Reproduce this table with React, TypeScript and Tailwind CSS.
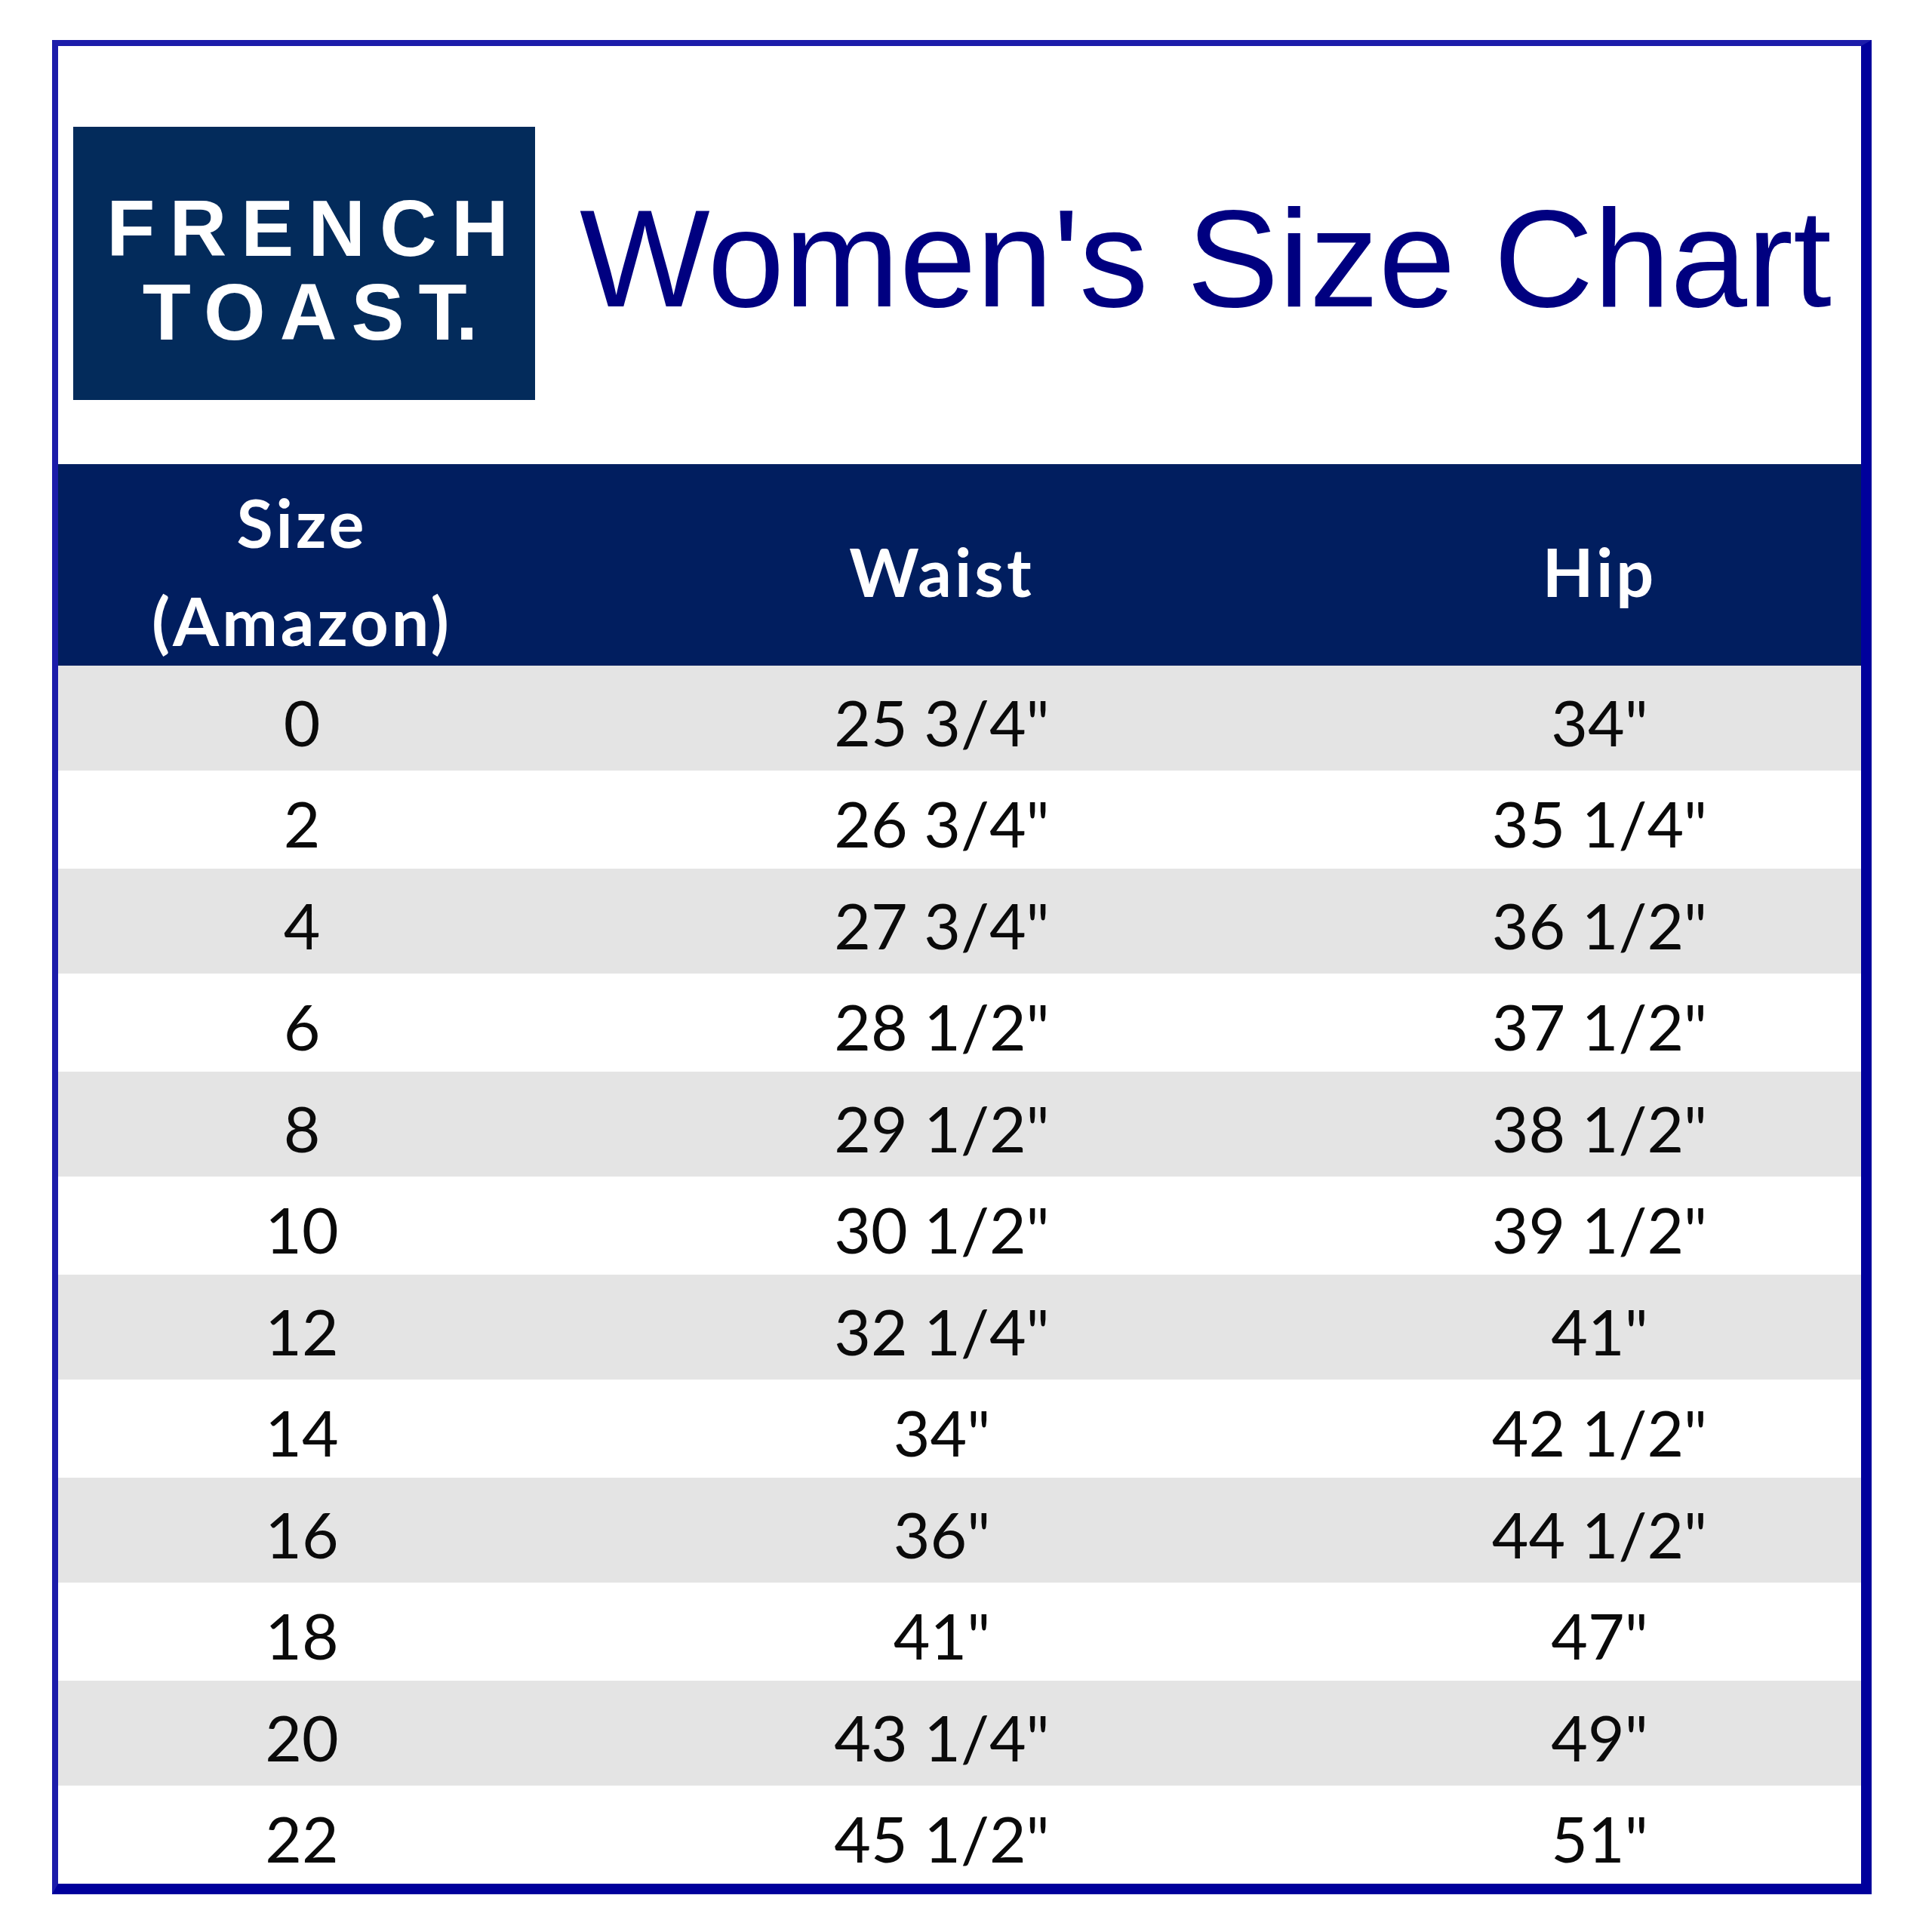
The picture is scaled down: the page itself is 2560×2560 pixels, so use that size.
const rows: [string, string, string][] = [
  ["0", '25 3/4"', '34"'],
  ["2", '26 3/4"', '35 1/4"'],
  ["4", '27 3/4"', '36 1/2"'],
  ["6", '28 1/2"', '37 1/2"'],
  ["8", '29 1/2"', '38 1/2"'],
  ["10", '30 1/2"', '39 1/2"'],
  ["12", '32 1/4"', '41"'],
  ["14", '34"', '42 1/2"'],
  ["16", '36"', '44 1/2"'],
  ["18", '41"', '47"'],
  ["20", '43 1/4"', '49"'],
  ["22", '45 1/2"', '51"'],
];

function Logo() {
  return (
    <div className="flex h-[362px] w-[612px] shrink-0 flex-col items-center justify-center bg-[#032b5b] pt-[18px] pl-[9px] font-['Liberation_Sans',Arial,sans-serif] text-[105px] font-bold leading-[111px] text-white">
      <div className="pl-[19px] tracking-[19px]">FRENCH</div>
      <div className="pl-[4px]">
        <span className="tracking-[19px]">TOAS</span>
        <span className="tracking-[-3px]">T.</span>
      </div>
    </div>
  );
}

export default function App() {
  return (
    <div className="h-[2560px] w-[2560px] bg-white pt-[53px] pl-[69px]">
      <div className="w-[2411px] border-t-[8px] border-l-[8px] border-r-[14px] border-b-[14px] border-t-[#1c1caa] border-l-[#1c1caa] border-r-[#00009c] border-b-[#00009c] bg-white">
        <div className="flex h-[554px] items-start pl-[20px] pt-[107px]">
          <Logo />
          <h1 className="ml-[59px] mt-[83px] whitespace-nowrap font-['Liberation_Sans',Arial,sans-serif] text-[183px] font-normal leading-none text-[#000080]">
            Women's Size Chart
          </h1>
        </div>

        <div className="font-['Lato','Open_Sans',sans-serif]">
          <div className="grid h-[267px] grid-cols-[646px_1050px_1fr] items-center bg-[#011e5f] pt-[12px] text-center text-[88px] font-bold tracking-[4px] text-white">
            <div className="leading-[130px]">
              Size
              <br />
              (Amazon)
            </div>
            <div className="leading-none">Waist</div>
            <div className="leading-none">Hip</div>
          </div>

          {rows.map(([size, waist, hip], i) => (
            <div
              key={size}
              className={
                i % 2 === 0
                  ? "grid h-[139px] grid-cols-[646px_1050px_1fr] items-center bg-[#e4e4e4] pt-[10px] text-center text-[84px] leading-none text-[#0a0a0a]"
                  : "grid h-[130px] grid-cols-[646px_1050px_1fr] items-center bg-white pt-[10px] text-center text-[84px] leading-none text-[#0a0a0a]"
              }
            >
              <div>{size}</div>
              <div>{waist}</div>
              <div>{hip}</div>
            </div>
          ))}
        </div>
      </div>
    </div>
  );
}
